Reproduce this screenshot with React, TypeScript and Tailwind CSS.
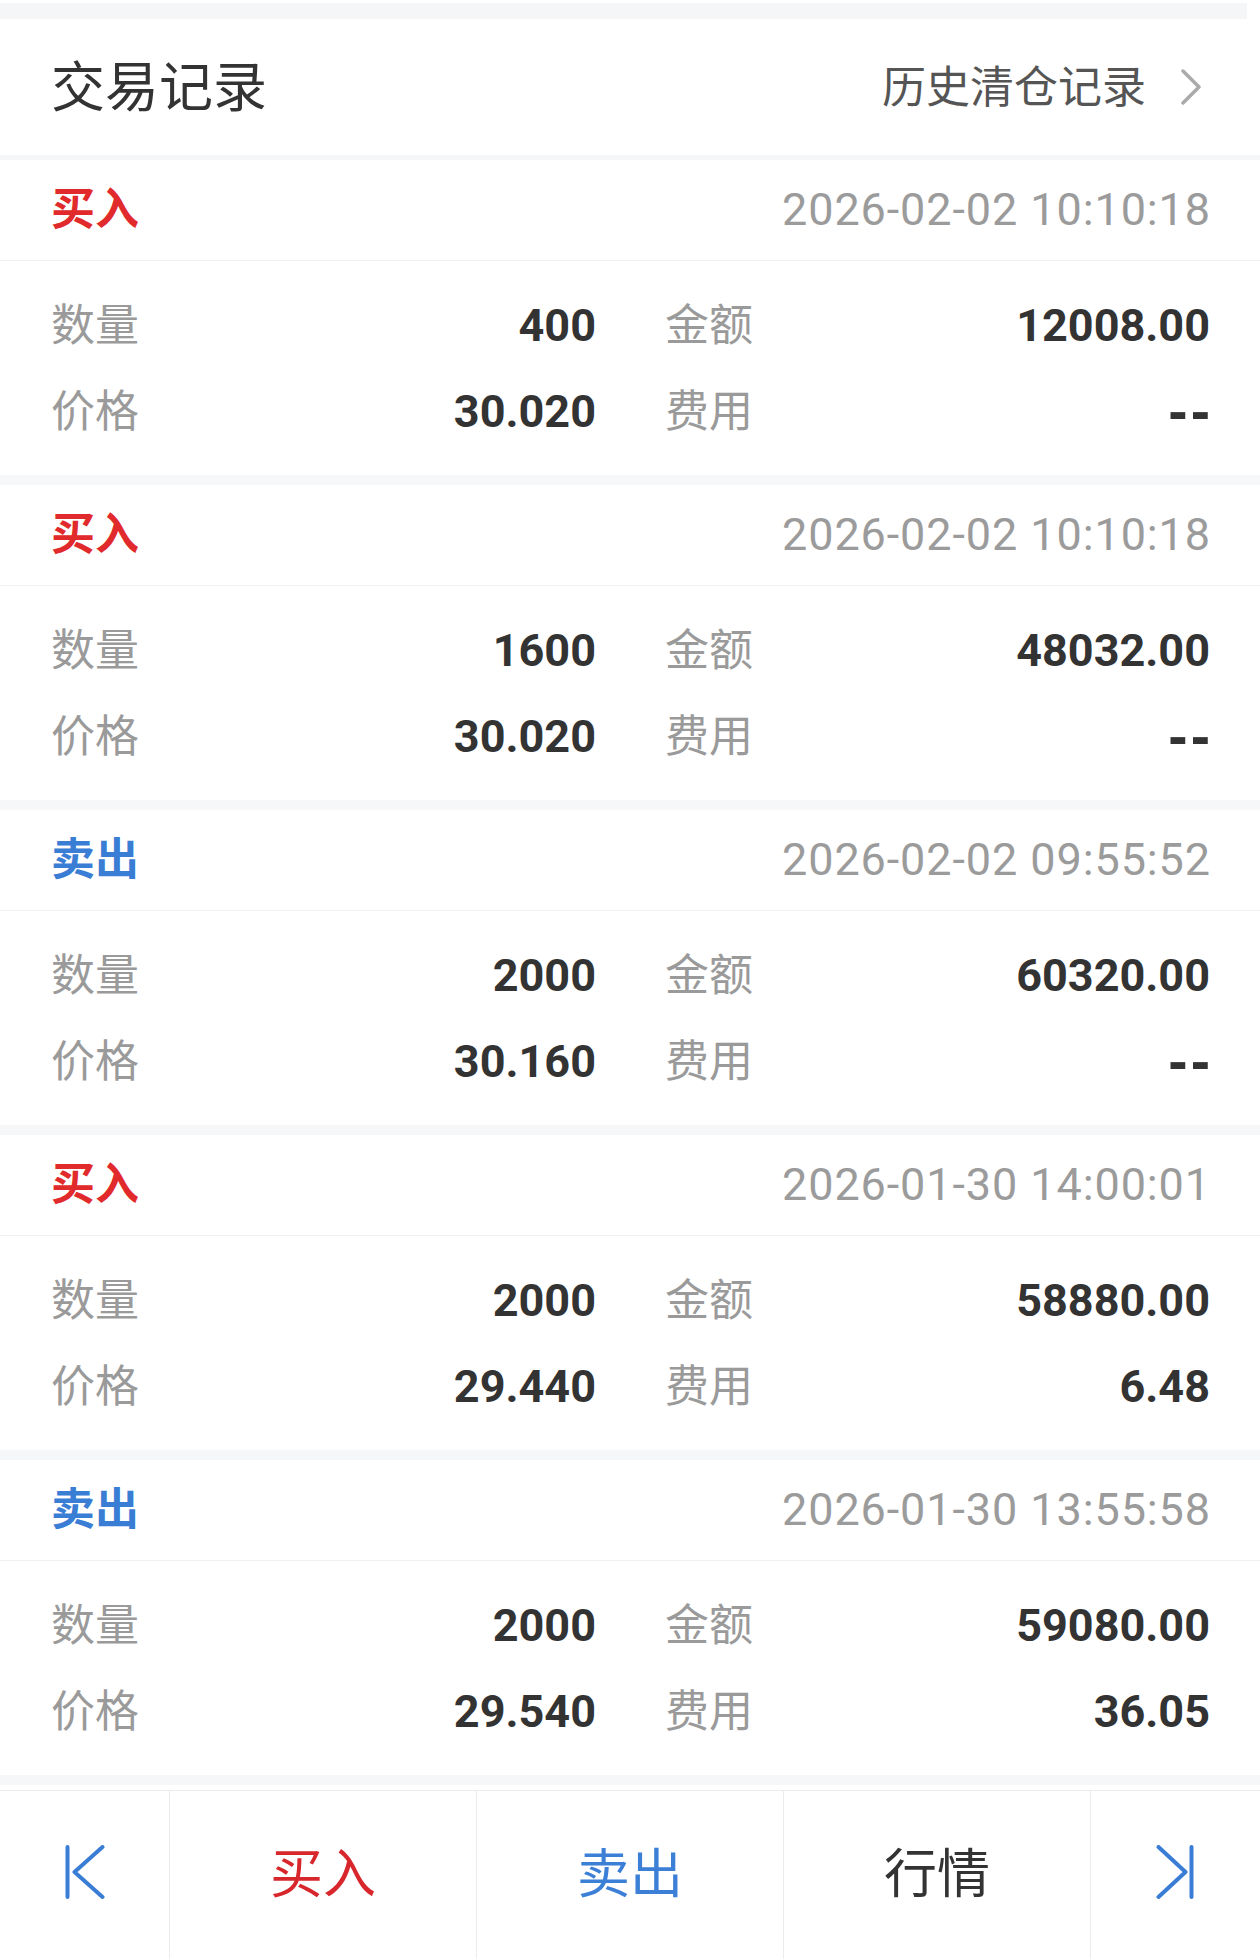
import React from "react";

type Rec = {
  side: "buy" | "sell";
  time: string;
  qty: string;
  amt: string;
  price: string;
  fee: string;
};

const records: Rec[] = [
  { side: "buy", time: "2026-02-02 10:10:18", qty: "400", amt: "12008.00", price: "30.020", fee: "--" },
  { side: "buy", time: "2026-02-02 10:10:18", qty: "1600", amt: "48032.00", price: "30.020", fee: "--" },
  { side: "sell", time: "2026-02-02 09:55:52", qty: "2000", amt: "60320.00", price: "30.160", fee: "--" },
  { side: "buy", time: "2026-01-30 14:00:01", qty: "2000", amt: "58880.00", price: "29.440", fee: "6.48" },
  { side: "sell", time: "2026-01-30 13:55:58", qty: "2000", amt: "59080.00", price: "29.540", fee: "36.05" },
];

function Cell({ label, value }: { label: string; value: string }) {
  const isDash = value === "--";
  return (
    <div className="h-[86px] flex items-center justify-between">
      <span className="text-[44px] leading-none text-[#9a9a9a] ml-[-1px]">{label}</span>
      {isDash ? (
        <span className="font-['Liberation_Sans',sans-serif] text-[58px] font-bold leading-none text-[#333333] tracking-[3px] mr-[-3px] pb-[2px]">
          --
        </span>
      ) : (
        <span className="text-[45px] font-bold leading-none text-[#333333]">{value}</span>
      )}
    </div>
  );
}

function Card({ r }: { r: Rec }) {
  const buy = r.side === "buy";
  return (
    <div className="bg-white h-[315px] shrink-0">
      <div className="h-[101px] flex items-center justify-between pl-[52px] pr-[50px] border-b border-[#f2f2f2]">
        <span
          className={`text-[44px] font-bold leading-none ml-[-1px] ${buy ? "text-[#e12a2b]" : "text-[#3a7dd5]"}`}
        >
          {buy ? "买入" : "卖出"}
        </span>
        <span className="text-[45px] leading-none text-[#9b9b9b] tracking-[0.9px] mr-[-1px]">{r.time}</span>
      </div>
      <div className="pl-[52px] pr-[50px] pt-[22px] grid grid-cols-2 gap-x-[70px]">
        <Cell label="数量" value={r.qty} />
        <Cell label="金额" value={r.amt} />
        <Cell label="价格" value={r.price} />
        <Cell label="费用" value={r.fee} />
      </div>
    </div>
  );
}

function FirstIcon() {
  return (
    <svg width="40" height="60" viewBox="0 0 40 60" fill="none" stroke="#3a7dd5" strokeWidth="4" strokeLinecap="round" strokeLinejoin="round">
      <line x1="2.5" y1="2" x2="2.5" y2="52" />
      <polyline points="37.5,2 9.5,27 37.5,52" />
    </svg>
  );
}

function LastIcon() {
  return (
    <svg width="40" height="60" viewBox="0 0 40 60" fill="none" stroke="#3a7dd5" strokeWidth="4" strokeLinecap="round" strokeLinejoin="round">
      <polyline points="2.5,2 29.5,27 2.5,52" />
      <line x1="35.5" y1="2" x2="35.5" y2="52" />
    </svg>
  );
}

export default function App() {
  return (
    <div className="w-[1260px] h-[1959px] bg-white overflow-hidden flex flex-col font-['Roboto','Noto_Sans_CJK_SC',sans-serif]">
      <div className="h-[1790px] overflow-hidden flex flex-col shrink-0">
        {/* top band */}
        <div className="h-[19px] shrink-0 flex flex-col">
          <div className="h-[3px] bg-white" />
          <div className="flex-1 bg-[#f5f6f8] mr-[13px]" />
        </div>
        {/* header */}
        <div className="h-[136px] shrink-0 bg-white flex items-center justify-between pl-[51px] pr-[58px]">
          <span className="text-[54px] leading-none text-[#333333] pt-[4px]">交易记录</span>
          <div className="flex items-center gap-[34px]">
            <span className="text-[44px] leading-none text-[#555555] pt-[2px]">历史清仓记录</span>
            <svg width="22" height="36" viewBox="0 0 22 36" fill="none" stroke="#aaaaaa" strokeWidth="3.5" strokeLinecap="round" strokeLinejoin="round">
              <polyline points="3,2 19,18 3,34" />
            </svg>
          </div>
        </div>
        <div className="h-[4.5px] shrink-0 bg-[#f5f6f8]" />
        {records.map((r, i) => (
          <React.Fragment key={i}>
            <Card r={r} />
            <div className="h-[10px] shrink-0 bg-[#f6f7f9]" />
          </React.Fragment>
        ))}
        <div className="h-[315px] shrink-0 bg-white" />
      </div>
      {/* bottom bar */}
      <div className="h-[169px] shrink-0 border-t border-[#ebebeb] flex bg-white">
        <div className="w-[170px] border-r border-[#ececec] flex items-center justify-center">
          <FirstIcon />
        </div>
        <div className="w-[307px] border-r border-[#ececec] flex items-center justify-center">
          <span className="text-[53px] leading-none text-[#d8272c]">买入</span>
        </div>
        <div className="w-[307px] border-r border-[#ececec] flex items-center justify-center">
          <span className="text-[53px] leading-none text-[#3b7fd6]">卖出</span>
        </div>
        <div className="w-[307px] border-r border-[#ececec] flex items-center justify-center">
          <span className="text-[53px] leading-none text-[#333333]">行情</span>
        </div>
        <div className="flex-1 flex items-center justify-center">
          <LastIcon />
        </div>
      </div>
    </div>
  );
}
